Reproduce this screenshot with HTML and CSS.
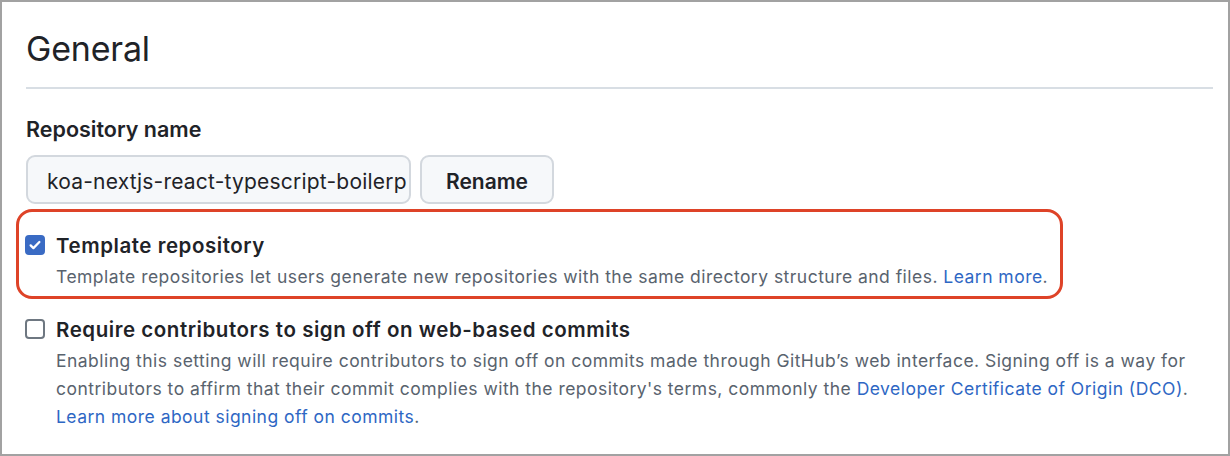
FILE: index.html
```html
<!DOCTYPE html>
<html lang="en">
<head>
<meta charset="utf-8">
<title>General settings</title>
<link rel="stylesheet" href="styles.css">
</head>
<body>
<div class="frame">
  <h2 class="heading">General</h2>
  <div class="divider"></div>

  <label class="field-label" for="repo-name">Repository name</label>
  <div class="field-row">
    <input class="text-input" id="repo-name" type="text" value="koa-nextjs-react-typescript-boilerplate">
    <button class="btn" type="button">Rename</button>
  </div>

  <div class="highlight">
    <div class="check-item">
      <span class="checkbox checked">
        <svg viewBox="0 0 16 16" width="14" height="14" aria-hidden="true"><path d="M3 8.4l3.2 3.2L13 4.6" fill="none" stroke="#fff" stroke-width="2.6" stroke-linecap="round" stroke-linejoin="round"/></svg>
      </span>
      <div class="check-body">
        <div class="check-title">Template repository</div>
        <p class="check-note">Template repositories let users generate new repositories with the same directory structure and files. <a href="#" class="link">Learn more</a>.</p>
      </div>
    </div>
  </div>

  <div class="check-item plain">
    <span class="checkbox"></span>
    <div class="check-body">
      <div class="check-title">Require contributors to sign off on web-based commits</div>
      <p class="check-note">Enabling this setting will require contributors to sign off on commits made through GitHub’s web interface. Signing off is a way for<br>contributors to affirm that their commit complies with the repository's terms, commonly the <a href="#" class="link">Developer Certificate of Origin (DCO)</a>.<br><a href="#" class="link">Learn more about signing off on commits</a>.</p>
    </div>
  </div>
</div>
</body>
</html>
```

FILE: styles.css
```css
* { box-sizing: border-box; }

html, body {
  margin: 0;
  padding: 0;
  background: #ffffff;
}

body {
  font-family: "Inter", "Noto Sans", "Liberation Sans", sans-serif;
  color: #1f2328;
}

.frame {
  width: 1230px;
  height: 456px;
  border: 2px solid #a2a2a2;
  padding: 0 15px 0 24px;
  overflow: hidden;
}

.heading {
  margin: 26px 0 0;
  font-size: 34px;
  line-height: 42px;
  font-weight: 400;
  letter-spacing: -0.2px;
}

.divider {
  height: 2px;
  background: #d8dee4;
  margin-top: 17px;
}

.field-label {
  display: block;
  margin-top: 26px;
  font-size: 21.5px;
  line-height: 28px;
  font-weight: 600;
}

.field-row {
  display: flex;
  gap: 9px;
  margin-top: 12px;
  height: 49px;
}

.text-input {
  width: 385px;
  height: 49px;
  padding: 3px 2px 0 19px;
  border: 2px solid #d3d8de;
  border-radius: 9px;
  background: #f6f8fa;
  font-family: inherit;
  font-size: 21px;
  letter-spacing: 0.2px;
  color: #1f2328;
  outline: none;
}

.btn {
  width: 134px;
  height: 49px;
  border: 2px solid #d3d8de;
  border-radius: 9px;
  background: #f6f8fa;
  font-family: inherit;
  font-size: 21px;
  font-weight: 600;
  color: #1f2328;
  padding: 3px 0 0;
}

.highlight {
  width: 1047px;
  margin: 5px 0 0 -10px;
  border: 3px solid #de4328;
  border-radius: 16px;
  padding: 21px 0 5px 6px;
}

.check-item {
  display: flex;
  gap: 11px;
  align-items: flex-start;
}

.check-item.plain {
  margin: 18px 0 0 -1px;
}

.checkbox {
  flex: none;
  width: 20px;
  height: 20px;
  margin-top: 2px;
  border: 2px solid #6e7781;
  border-radius: 4px;
  background: #fff;
  display: flex;
  align-items: center;
  justify-content: center;
}

.checkbox.checked {
  border-color: #3a6bc4;
  background: #3a6bc4;
}

.check-body {
  min-width: 0;
}

.check-title {
  font-size: 20.5px;
  line-height: 26px;
  font-weight: 600;
  letter-spacing: 0.55px;
}

.check-note {
  margin: 4px 0 0;
  font-size: 17.5px;
  line-height: 28px;
  letter-spacing: 0.47px;
  color: #59636e;
  white-space: nowrap;
}

.link {
  color: #2e67c4;
  text-decoration: none;
}
```
